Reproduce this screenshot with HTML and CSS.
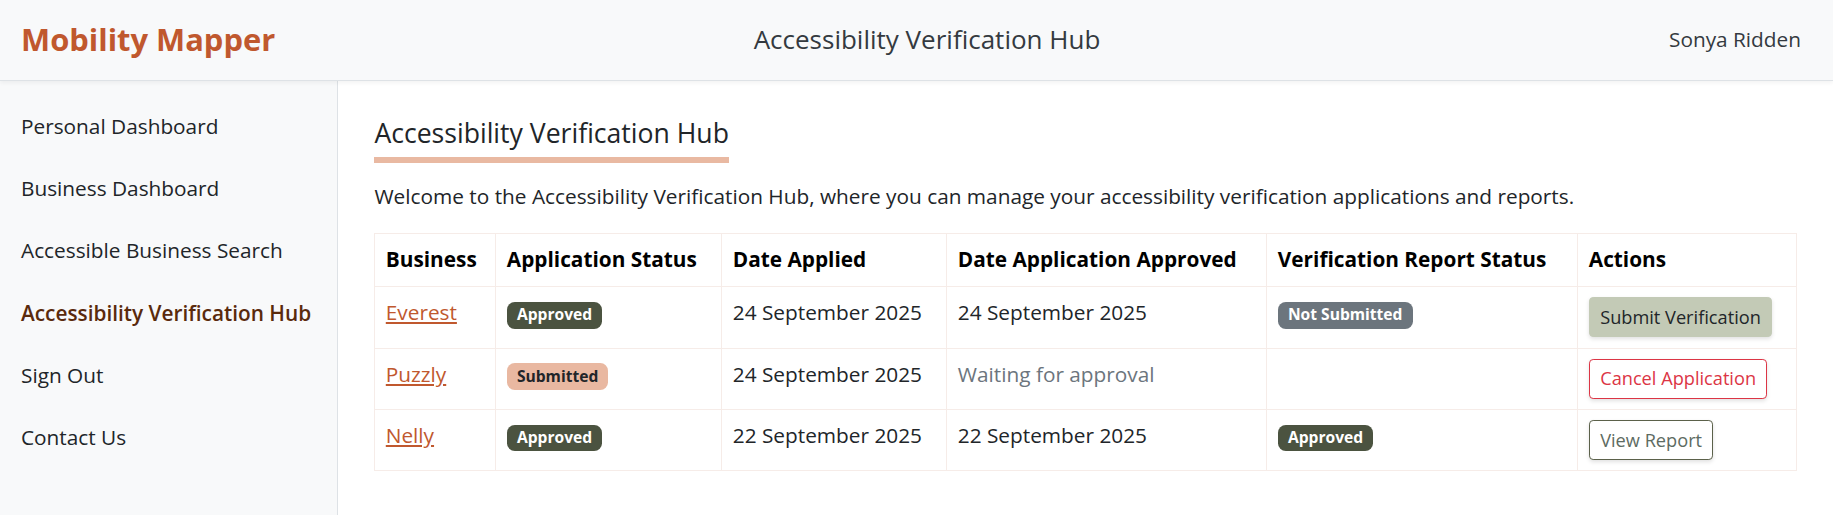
FILE: index.html
```html
<!DOCTYPE html>
<html lang="en">
<head>
<meta charset="utf-8">
<title>Accessibility Verification Hub - Mobility Mapper</title>
<link rel="stylesheet" href="styles.css">
</head>
<body>
<header class="topbar">
  <div class="brand">Mobility Mapper</div>
  <div class="page-title">Accessibility Verification Hub</div>
  <div class="user">Sonya Ridden</div>
</header>
<div class="layout">
  <nav class="sidebar">
    <a class="nav-item" href="#">Personal Dashboard</a>
    <a class="nav-item" href="#">Business Dashboard</a>
    <a class="nav-item" href="#">Accessible Business Search</a>
    <a class="nav-item active" href="#">Accessibility Verification Hub</a>
    <a class="nav-item" href="#">Sign Out</a>
    <a class="nav-item" href="#">Contact Us</a>
  </nav>
  <main class="content">
    <h1 class="hub-title">Accessibility Verification Hub</h1>
    <p class="intro">Welcome to the Accessibility Verification Hub, where you can manage your accessibility verification applications and reports.</p>
    <table class="hub-table">
      <colgroup>
        <col class="col-business">
        <col class="col-status">
        <col class="col-applied">
        <col class="col-approved">
        <col class="col-report">
        <col class="col-actions">
      </colgroup>
      <thead>
        <tr>
          <th>Business</th>
          <th>Application Status</th>
          <th>Date Applied</th>
          <th>Date Application Approved</th>
          <th>Verification Report Status</th>
          <th>Actions</th>
        </tr>
      </thead>
      <tbody>
        <tr>
          <td><a class="biz-link" href="#">Everest</a></td>
          <td><span class="badge badge-approved">Approved</span></td>
          <td>24 September 2025</td>
          <td>24 September 2025</td>
          <td><span class="badge badge-secondary">Not Submitted</span></td>
          <td><button class="btn btn-sage" type="button">Submit Verification</button></td>
        </tr>
        <tr>
          <td><a class="biz-link" href="#">Puzzly</a></td>
          <td><span class="badge badge-submitted">Submitted</span></td>
          <td>24 September 2025</td>
          <td class="muted">Waiting for approval</td>
          <td></td>
          <td><button class="btn btn-outline-danger" type="button">Cancel Application</button></td>
        </tr>
        <tr>
          <td><a class="biz-link" href="#">Nelly</a></td>
          <td><span class="badge badge-approved">Approved</span></td>
          <td>22 September 2025</td>
          <td>22 September 2025</td>
          <td><span class="badge badge-approved">Approved</span></td>
          <td><button class="btn btn-outline-olive" type="button">View Report</button></td>
        </tr>
      </tbody>
    </table>
  </main>
</div>
</body>
</html>
```
FILE: styles.css
```css
html {
  font-size: 20.8px;
}
* {
  box-sizing: border-box;
}
body {
  margin: 0;
  font-family: "Open Sans", "Noto Sans", sans-serif;
  font-size: 1rem;
  line-height: 1.5;
  color: #212529;
  background: #ffffff;
}

.topbar {
  display: grid;
  grid-template-columns: 1fr auto 1fr;
  align-items: center;
  height: 81px;
  padding-left: 21px;
  background: #f8f9fa;
  border-bottom: 1px solid #dee2e6;
  box-shadow: 0 2px 4px rgba(0, 0, 0, 0.05);
  position: relative;
  z-index: 1;
}
.brand {
  justify-self: start;
  font-size: 30.9px;
  font-weight: 700;
  line-height: 1.2;
  color: #c0582e;
}
.page-title {
  font-size: 26px;
  line-height: 1.2;
  color: #343a40;
}
.user {
  justify-self: end;
  margin-right: 32px;
  color: #343a40;
}

.layout {
  display: flex;
  min-height: calc(100vh - 81px);
}
.sidebar {
  width: 338px;
  flex: none;
  padding: 14px 21px;
  background: #f8f9fa;
  border-right: 1px solid #dee2e6;
  display: flex;
  flex-direction: column;
}
.nav-item {
  display: block;
  padding: 15.6px 0;
  color: #212529;
  text-decoration: none;
  white-space: nowrap;
}
.nav-item.active {
  font-weight: 600;
  color: #5a2a0c;
}

.content {
  flex: 1;
  min-width: 0;
  padding: 37px 36.4px 35px;
}
.hub-title {
  width: fit-content;
  margin: 0 0 18px;
  padding-bottom: 7px;
  font-size: 26.6px;
  font-weight: 400;
  line-height: 1.2;
  color: #212529;
  border-bottom: 6px solid #e9b9a2;
}
.intro {
  margin: 0 0 21px;
}

.hub-table {
  width: 100%;
  border-collapse: collapse;
  table-layout: fixed;
  border: 1px solid #f6ece8;
}
.col-business { width: 121px; }
.col-status { width: 226px; }
.col-applied { width: 225px; }
.col-approved { width: 320px; }
.col-report { width: 311px; }
.hub-table th,
.hub-table td {
  padding: 0.5rem;
  border: 1px solid #f6ece8;
  text-align: left;
  vertical-align: top;
  white-space: nowrap;
}
.hub-table th {
  font-weight: 700;
  color: #000000;
}
.biz-link {
  color: #c0582e;
  text-decoration: underline;
}
.muted {
  color: #6c757d;
}

.badge {
  display: inline-block;
  padding: 0.35em 0.65em;
  font-size: 0.75em;
  font-weight: 700;
  line-height: 1;
  color: #ffffff;
  border-radius: 0.375rem;
  white-space: nowrap;
}
.badge-approved {
  background: #4b5340;
}
.badge-submitted {
  background: #e9b8a1;
  color: #212529;
}
.badge-secondary {
  background: #6c757d;
}

.btn {
  display: inline-block;
  margin: 0;
  padding: 0.25rem 0.5rem;
  font-family: inherit;
  font-size: 0.875rem;
  line-height: 1.5;
  border: 1px solid transparent;
  border-radius: 0.2rem;
  box-shadow: 0 2px 4px rgba(0, 0, 0, 0.12);
  cursor: pointer;
  background: #ffffff;
}
.btn-sage {
  background: #c3cab6;
  border-color: #c3cab6;
  color: #212529;
}
.btn-outline-danger {
  color: #dc3545;
  border-color: #dc3545;
}
.btn-outline-olive {
  color: #5d6b62;
  border-color: #5b614a;
}
```
